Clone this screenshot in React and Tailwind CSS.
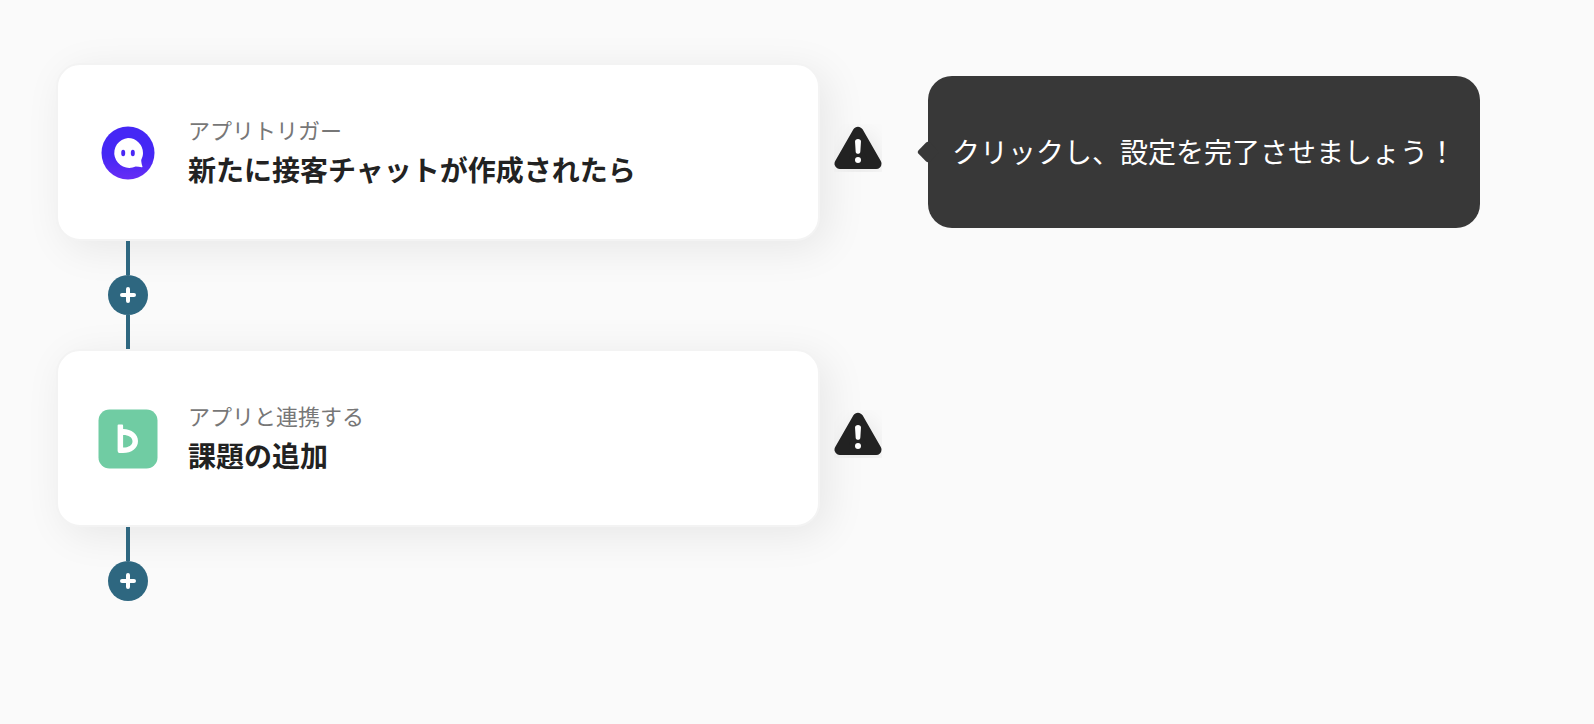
import React from 'react';

const ChatIcon = () => (
  <svg className="w-[60px] h-[62px] shrink-0" viewBox="0 -1.5 60 62" aria-hidden="true">
    <defs>
      <linearGradient id="chat-bg" x1="0" y1="0" x2="0" y2="1">
        <stop offset="0.55" stopColor="#4527f5" />
        <stop offset="1" stopColor="#682df5" />
      </linearGradient>
    </defs>
    <circle cx="30" cy="30.5" r="26.5" fill="url(#chat-bg)" />
    <path
      d="M30 15.5a15 15 0 0 1 15 15c0 2.6-.8 4.8-1.8 7 .1 2.6.6 4.8 1.2 6.3.2.7-.2 1.1-.9.9-1.900-.5-3.700-.7-5.800-.7A15 15 0 1 1 30 15.500z"
      fill="#fff"
    />
    <ellipse cx="25.2" cy="30.5" rx="2" ry="3.2" fill="#4a28f5" />
    <ellipse cx="34.8" cy="30.5" rx="2" ry="3.2" fill="#4a28f5" />
  </svg>
);

const BacklogIcon = () => (
  <svg className="w-[60px] h-[62px] shrink-0" viewBox="0 -1.5 60 62" aria-hidden="true">
    <rect x="0.5" y="1" width="59" height="59" rx="11" fill="#70cca3" />
    <path
      fillRule="evenodd"
      d="M20.5 16h3.7c.6 0 .9.3.9.9v3.7C33.5 20.8 40 25.5 40 32.6 40 40 33.500 44.6 25 44.6h-2.800c-1.700 0-2.600-.9-2.600-2.600V16.900c0-.6.3-.9.9-.9zM25.100 26.400v12.600c5.600 0 9.400-2.300 9.400-6.300s-3.800-6.300-9.400-6.300z"
      fill="#fff"
    />
  </svg>
);

const WarningIcon = () => (
  <svg className="w-12 h-12 overflow-hidden" viewBox="0 0 48 48" aria-hidden="true">
    <path
      className="drop-shadow-[4px_4px_10px_rgba(0,0,0,0.08)]"
      d="M24 8L5.8 39.7h36.4z"
      fill="#222"
      stroke="#222"
      strokeWidth="10.6"
      strokeLinejoin="round"
    />
    <path d="M21 17.5c0-1.6 1.3-2.5 3-2.5s3 .9 3 2.5l-.7 10.200c-.1 1.300-1 2.100-2.300 2.100s-2.200-.8-2.300-2.100z" fill="#fff" />
    <circle cx="24" cy="36" r="3" fill="#fff" />
  </svg>
);

const steps = [
  {
    id: 'trigger',
    label: 'アプリトリガー',
    title: '新たに接客チャットが作成されたら',
    icon: ChatIcon,
    hint: 'クリックし、設定を完了させましょう！'
  },
  {
    id: 'action',
    label: 'アプリと連携する',
    title: '課題の追加',
    icon: BacklogIcon
  }
];

const Connector = ({ last }) => (
  <div className="ml-[52px] w-10 flex flex-col items-center relative">
    <div className="w-1 h-[34px] bg-[#2e6780]" />
    <button
      type="button"
      aria-label="ステップを追加"
      className="w-10 h-10 rounded-full bg-[#2e6780] flex items-center justify-center cursor-pointer"
    >
      <svg className="w-4 h-4" viewBox="0 0 16 16" aria-hidden="true">
        <path d="M8 2v12M2 8h12" stroke="#fff" strokeWidth="4" strokeLinecap="round" />
      </svg>
    </button>
    {!last && <div className="w-1 h-[34px] bg-[#2e6780]" />}
  </div>
);

const Hint = ({ children }) => (
  <div role="tooltip" className="relative ml-[46px] px-6 pt-[53px] pb-[55px] rounded-3xl bg-[#383838] text-white">
    <span className="absolute -left-2 top-1/2 -translate-y-1/2 w-4 h-4 rotate-45 rounded-[3px] bg-[#383838]" />
    <p className="relative text-[28px] leading-[44px] whitespace-nowrap">{children}</p>
  </div>
);

const Step = ({ step }) => {
  const Icon = step.icon;

  return (
    <div className="flex items-center">
      <button
        type="button"
        className="w-[764px] min-w-0 py-12 px-10 flex items-center gap-[30px] text-left rounded-3xl border-2 border-[#f3f3f3] bg-white shadow-[8px_8px_40px_rgba(0,0,0,0.08)] cursor-pointer"
      >
        <Icon />
        <span className="flex flex-col gap-0.5">
          <span className="text-[22px] leading-[32px] text-[#777]">{step.label}</span>
          <span className="text-[28px] leading-[44px] font-bold text-[#222]">{step.title}</span>
        </span>
      </button>
      <button type="button" aria-label="設定が未完了です" className="relative ml-[14px] mb-2 shrink-0 cursor-pointer">
        <WarningIcon />
      </button>
      {step.hint && <Hint>{step.hint}</Hint>}
    </div>
  );
};

const App = () => {
  return (
    <main className="min-h-screen bg-[#fafafa] px-14 py-[63px] font-['Noto_Sans_CJK_JP',sans-serif]">
      {steps.map((step, i) => (
        <React.Fragment key={step.id}>
          <Step step={step} />
          <Connector last={i === steps.length - 1} />
        </React.Fragment>
      ))}
    </main>
  );
};

export default App;
